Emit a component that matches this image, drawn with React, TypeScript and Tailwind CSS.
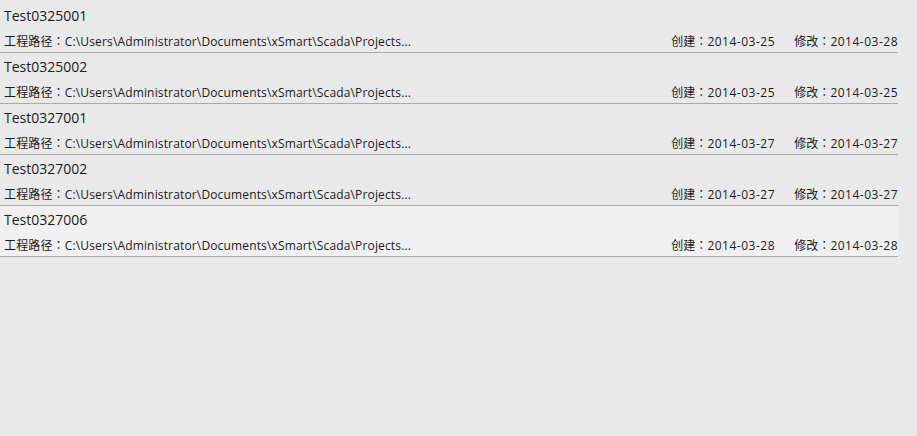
import React from 'react';

interface Project {
  name: string;
  path: string;
  created: string;
  modified: string;
}

const projects: Project[] = [
  { name: 'Test0325001', path: 'C:\\Users\\Administrator\\Documents\\xSmart\\Scada\\Projects...', created: '2014-03-25', modified: '2014-03-28' },
  { name: 'Test0325002', path: 'C:\\Users\\Administrator\\Documents\\xSmart\\Scada\\Projects...', created: '2014-03-25', modified: '2014-03-25' },
  { name: 'Test0327001', path: 'C:\\Users\\Administrator\\Documents\\xSmart\\Scada\\Projects...', created: '2014-03-27', modified: '2014-03-27' },
  { name: 'Test0327002', path: 'C:\\Users\\Administrator\\Documents\\xSmart\\Scada\\Projects...', created: '2014-03-27', modified: '2014-03-27' },
  { name: 'Test0327006', path: 'C:\\Users\\Administrator\\Documents\\xSmart\\Scada\\Projects...', created: '2014-03-28', modified: '2014-03-28' },
];

// centred full-width colon, as the TC face draws it
const Colon = () => <span style={{ fontFamily: '"Noto Sans CJK TC", sans-serif' }}>：</span>;

const App: React.FC = () => {
  return (
    <div
      className="w-[917px] h-[436px] bg-[#e9e9e9] text-[#1b1b1b] overflow-hidden"
      style={{ fontFamily: '"Open Sans", "Noto Sans CJK SC", sans-serif' }}
    >
      <div className="w-[898px] pt-[2px]">
        {projects.map((p, i) => (
          <div
            key={p.name}
            className={`h-[51px] border-b border-[#a9a9a9] flex flex-col ${
              i === projects.length - 1 ? 'bg-[#f0f0f0]' : ''
            }`}
          >
            <div className="h-[28px] flex items-center px-1 text-[14px] leading-none">{p.name}</div>
            <div className="flex-1 flex items-center pl-1 text-[12px] leading-none whitespace-nowrap">
              <span className="flex-1 tracking-[0.15px]">
                工程路径<Colon />{p.path}
              </span>
              <span className="w-[123px] shrink-0">
                创建<Colon /><span className="tracking-[0.5px]">{p.created}</span>
              </span>
              <span className="shrink-0">
                修改<Colon /><span className="tracking-[0.5px]">{p.modified}</span>
              </span>
            </div>
          </div>
        ))}
      </div>
    </div>
  );
};

export default App;
